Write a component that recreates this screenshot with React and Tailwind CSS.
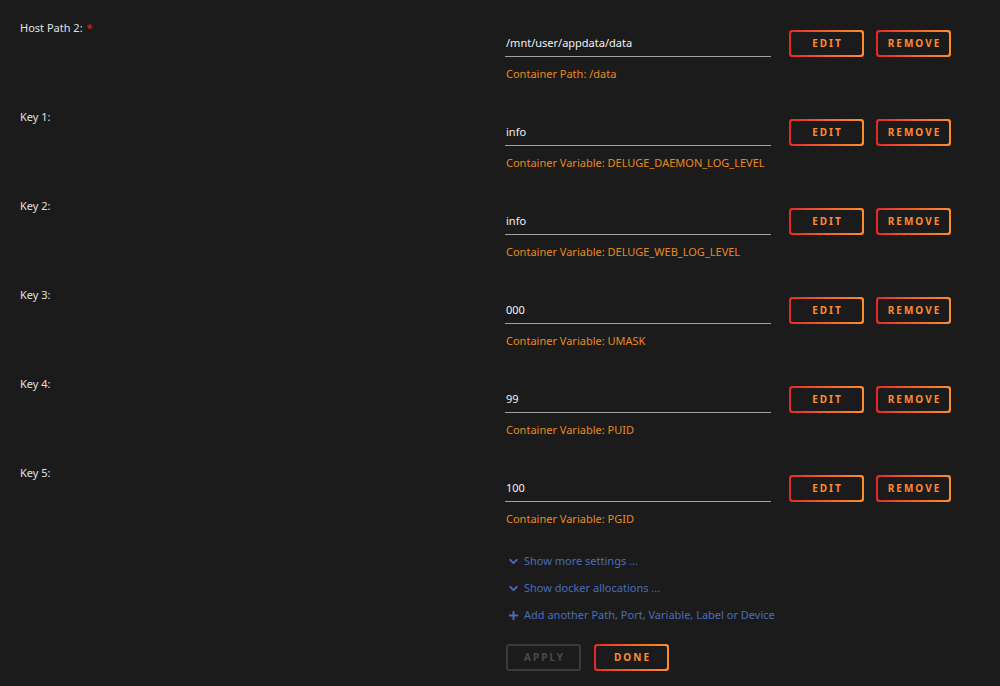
import React from "react";
import { ChevronDown, Plus } from "lucide-react";

const rows = [
  { label: "Host Path 2:", required: true, value: "/mnt/user/appdata/data", note: "Container Path: /data" },
  { label: "Key 1:", value: "info", note: "Container Variable: DELUGE_DAEMON_LOG_LEVEL" },
  { label: "Key 2:", value: "info", note: "Container Variable: DELUGE_WEB_LOG_LEVEL" },
  { label: "Key 3:", value: "000", note: "Container Variable: UMASK" },
  { label: "Key 4:", value: "99", note: "Container Variable: PUID" },
  { label: "Key 5:", value: "100", note: "Container Variable: PGID" },
];

function GradButton({ children, className = "" }) {
  return (
    <div className={"rounded-[3px] bg-linear-to-r from-[#e22828] to-[#ff8c2f] p-[2px] " + className}>
      <div className="flex h-full w-full items-center justify-center rounded-[2px] bg-[#1c1b1b] pl-[2px] text-[10px] font-bold tracking-[2px] text-[#ff8c2f]">
        {children}
      </div>
    </div>
  );
}

function Row({ label, required, value, note }) {
  return (
    <div className="flex h-[89px]">
      <div className="w-[505px] shrink-0 pl-5 pt-[2px] text-[11px] leading-[18px] text-[#e0e0e0]">
        {label}
        {required && <span className="ml-1 text-[#e22828]">*</span>}
      </div>
      <div className="flex flex-col">
        <div className="mt-[13px] flex items-end">
          <div className="flex h-[26px] w-[266px] items-center border-b border-[#a0a0a0] pl-[1px] text-[11px] text-[#f2f2f2]">
            {value}
          </div>
          <GradButton className="ml-[18px] h-[27px] w-[75px]">EDIT</GradButton>
          <GradButton className="ml-[12px] h-[27px] w-[75px]">REMOVE</GradButton>
        </div>
        <div className="mt-[8px] pl-[1px] text-[11px] leading-[18px] text-[#e68a1e]">{note}</div>
      </div>
    </div>
  );
}

export default function App() {
  return (
    <div
      className="min-h-screen bg-[#1c1b1b] pt-[17px]"
      style={{ fontFamily: "'Noto Sans', 'Open Sans', sans-serif" }}
    >
      {rows.map((r) => (
        <Row key={r.label} {...r} />
      ))}
      <div className="-mt-[3px] ml-[507px] text-[11px] text-[#486dba]">
        <div className="flex h-[27px] items-center gap-[4px]">
          <ChevronDown size={13} strokeWidth={3.5} />
          <span>Show more settings ...</span>
        </div>
        <div className="flex h-[27px] items-center gap-[4px]">
          <ChevronDown size={13} strokeWidth={3.5} />
          <span>Show docker allocations ...</span>
        </div>
        <div className="flex h-[27px] items-center gap-[4px]">
          <Plus size={13} strokeWidth={3.5} />
          <span>Add another Path, Port, Variable, Label or Device</span>
        </div>
        <div className="-ml-px mt-[15px] flex gap-[13px]">
          <div className="flex h-[27px] w-[75px] items-center justify-center rounded-[3px] border-2 border-[#3a3a3a] pl-[2px] text-[10px] font-bold tracking-[2px] text-[#4a4a4a]">
            APPLY
          </div>
          <GradButton className="h-[27px] w-[75px]">DONE</GradButton>
        </div>
      </div>
    </div>
  );
}
